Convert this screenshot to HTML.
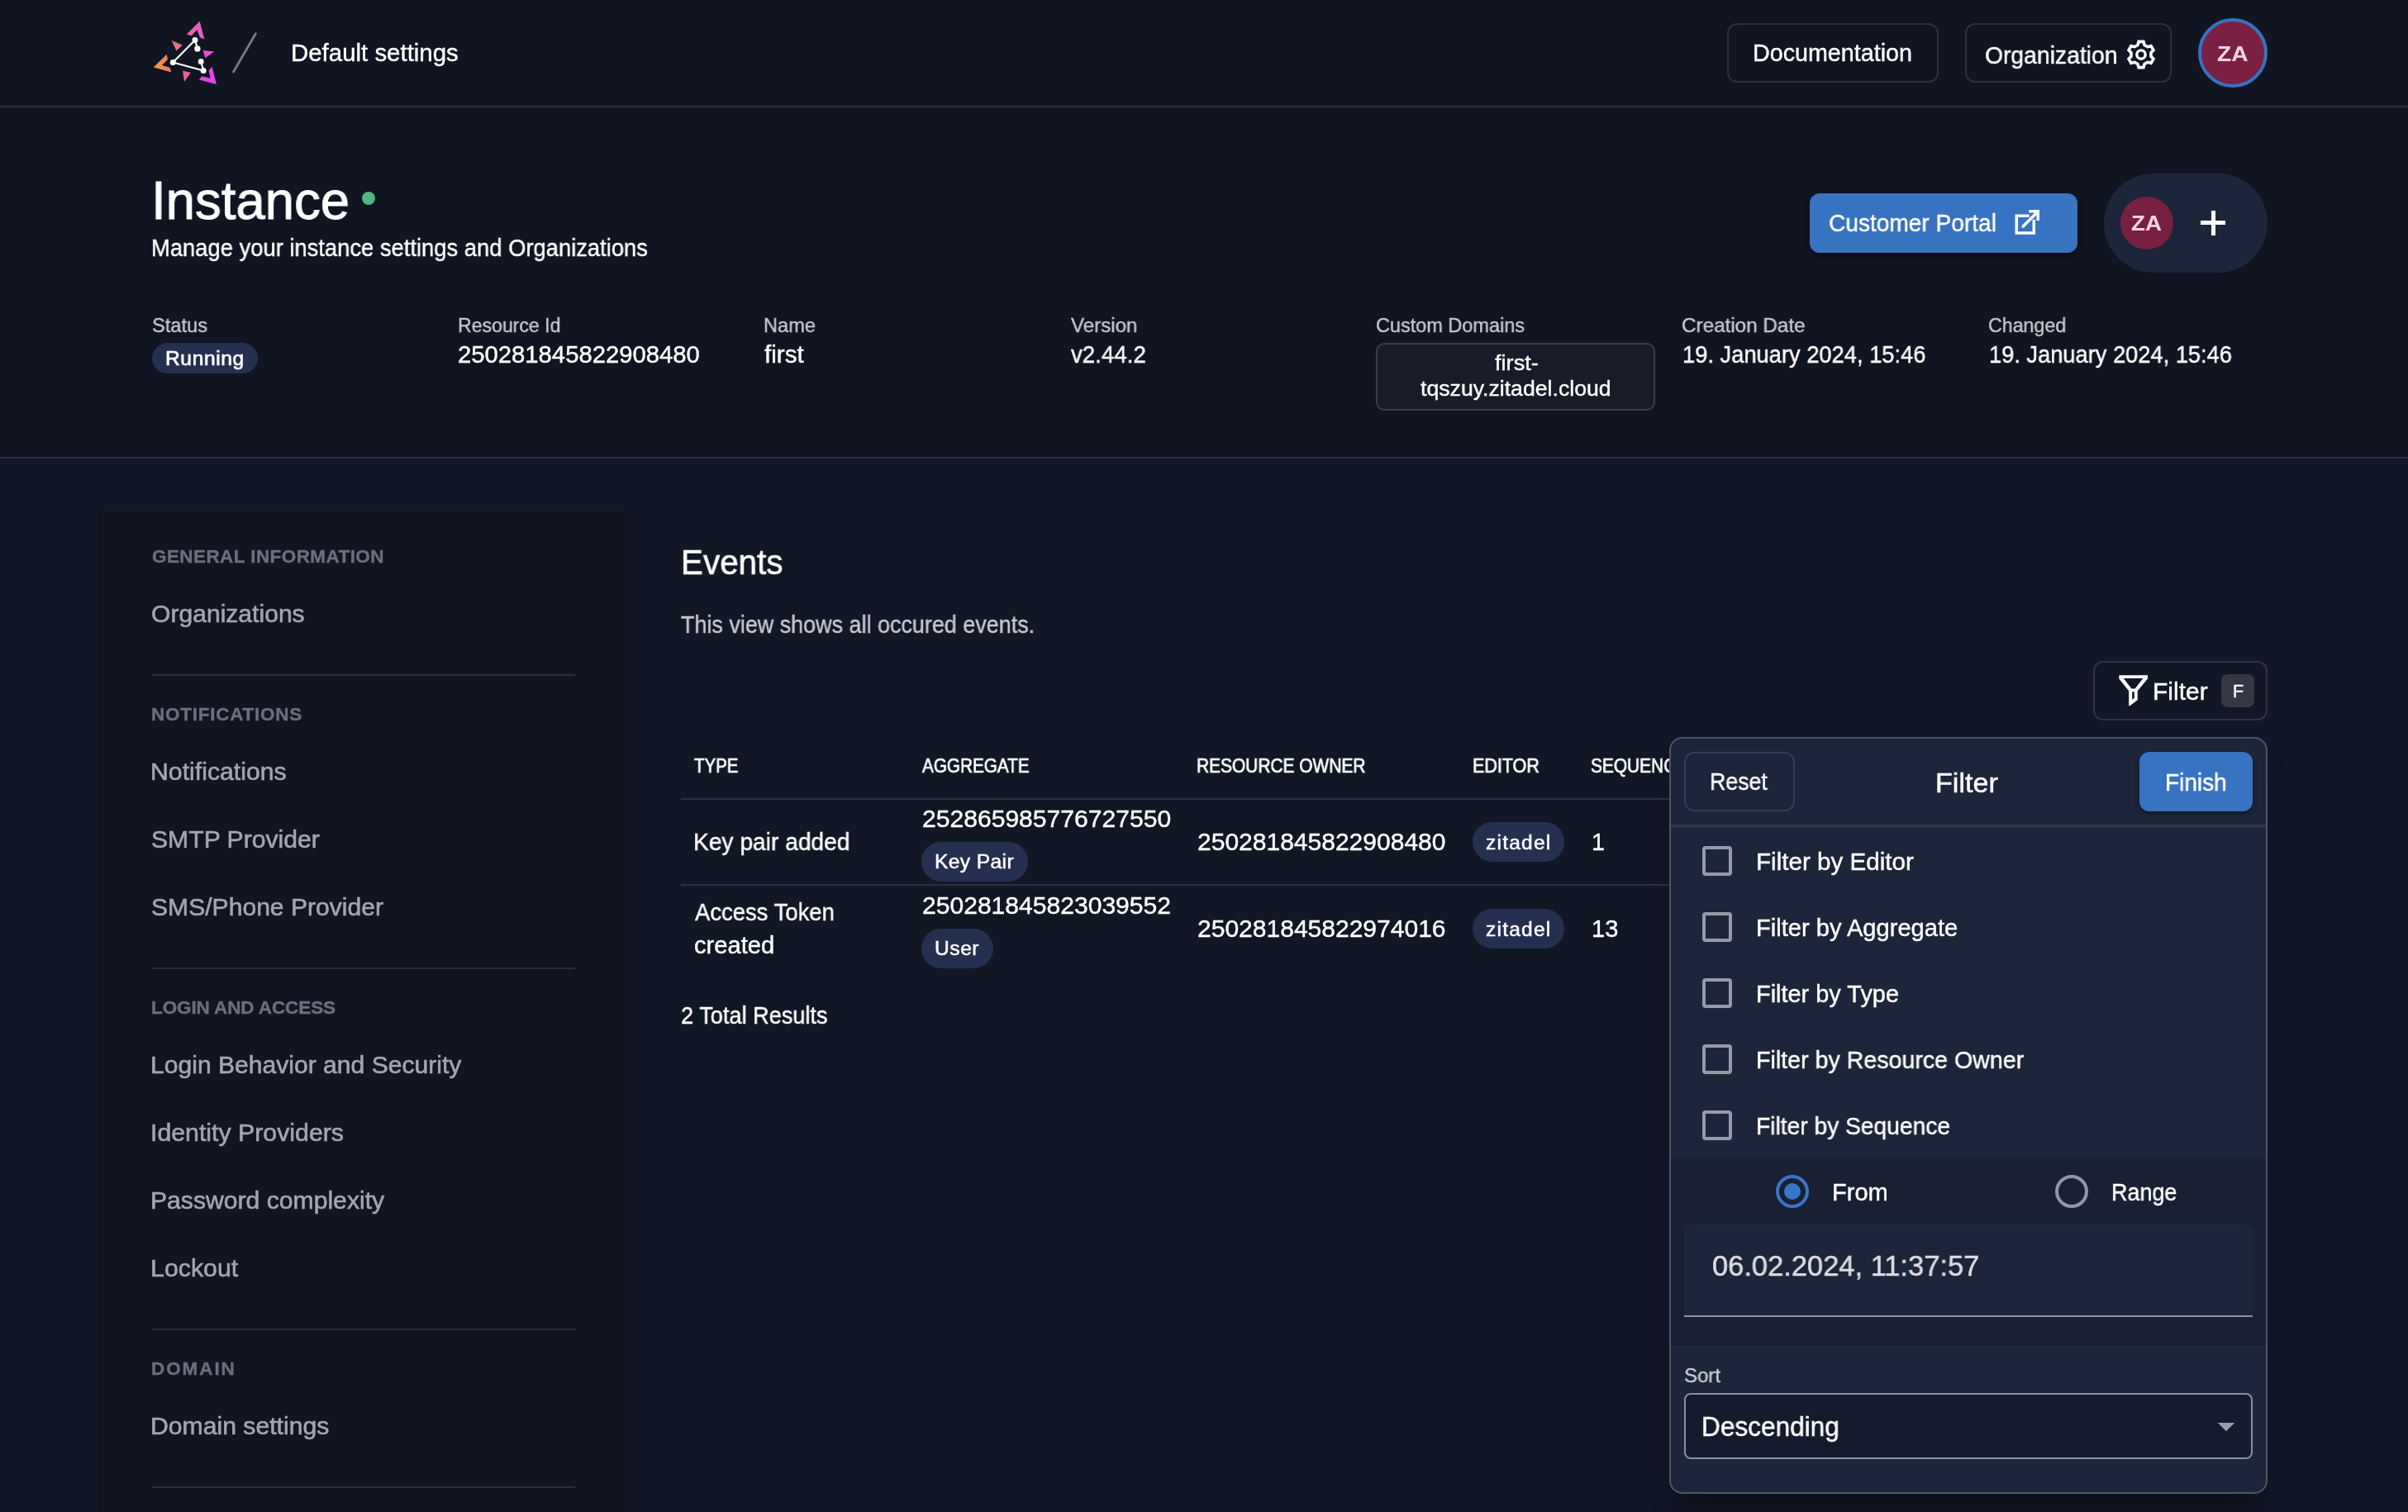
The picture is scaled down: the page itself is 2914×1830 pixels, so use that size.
<!DOCTYPE html>
<html lang="en"><head><meta charset="utf-8"><title>ZITADEL Console - Instance Events</title>
<style>
html,body{margin:0;padding:0}
body{width:2914px;height:1830px;overflow:hidden;background:#121726;font-family:"Liberation Sans",sans-serif;position:relative}
.t{position:absolute;white-space:pre;z-index:3;transform-origin:0 0;-webkit-text-stroke:0.4px currentColor;will-change:transform}
.t{margin:0;padding:0;font-weight:400;display:block;text-decoration:none}
.b{position:absolute;box-sizing:border-box}
svg{position:absolute;overflow:visible}
@media (max-width:1600px){html{zoom:.5}}

</style></head>
<body>
<!-- top area -->
<div class="b" style="left:0;top:0;width:2914px;height:554px;background:#111421"></div>
<div class="b" style="left:0;top:128px;width:2914px;height:2px;background:#2c303d"></div>
<div class="b" style="left:0;top:553px;width:2914px;height:2px;background:#2c303d"></div>
<!-- logo -->
<svg style="left:0;top:0" width="320" height="128" viewBox="0 0 320 128">
<defs>
<linearGradient id="gl" x1="186" y1="80" x2="207" y2="80" gradientUnits="userSpaceOnUse"><stop offset="0" stop-color="#f19a3a"/><stop offset="1" stop-color="#ec7768"/></linearGradient>
<linearGradient id="gt" x1="226" y1="40" x2="247" y2="40" gradientUnits="userSpaceOnUse"><stop offset="0" stop-color="#ea62a8"/><stop offset="1" stop-color="#e45ac4"/></linearGradient>
<linearGradient id="gb" x1="241" y1="90" x2="262" y2="90" gradientUnits="userSpaceOnUse"><stop offset="0" stop-color="#dc4cd2"/><stop offset="1" stop-color="#e545e8"/></linearGradient>
</defs>
<polygon fill="url(#gt)" points="241.7,25.8 247.4,47.4 242,45.5 238.5,36 231.6,43.3 225.8,41.4"/>
<polygon fill="#e9707f" points="207.7,49 220.8,54.4 213.5,61.4"/>
<polygon fill="#dc4fd4" points="245.5,61.1 259.2,62.3 248.4,70.3"/>
<polygon fill="url(#gl)" points="185.8,81.4 201.7,65.8 203,71.9 196,78.9 205.5,81.7 207.4,87.4"/>
<polygon fill="#e8609a" points="221.1,85.5 230.9,88.1 223,98.9"/>
<polygon fill="url(#gb)" points="262,102 256.6,80.8 252.5,85.2 254.7,94.7 244.3,92.2 240.8,96.6"/>
<g stroke="#fff" stroke-width="2.1" fill="none" stroke-linecap="round"><path d="M236 48.4L209.3 75.4L246.2 85.5M236 48.4L238.9 58.9M243.2 74.4L246.2 85.5"/></g>
<g fill="#fff"><circle cx="236" cy="48.4" r="3.5"/><circle cx="209.3" cy="75.4" r="3.5"/><circle cx="246.2" cy="85.5" r="3.5"/><circle cx="238.9" cy="58.9" r="3.7"/><circle cx="243.2" cy="74.4" r="3.5"/></g>
<line x1="282.5" y1="87" x2="309.5" y2="40.5" stroke="#7b7e88" stroke-width="2.6" stroke-linecap="round"/>
</svg>
<!-- header buttons -->
<div class="b" style="left:2090px;top:28px;width:256px;height:72px;border:2px solid #2c2f3b;border-radius:12px"></div>
<div class="b" style="left:2378px;top:28px;width:250px;height:72px;border:2px solid #2c2f3b;border-radius:12px"></div>
<svg style="left:2571.2px;top:45.5px" width="40" height="40" viewBox="-20 -20 40 40">
<g fill="none" stroke="#fff" stroke-width="3.6" stroke-linejoin="miter">
<path d="M-4.10 -11.50L-2.90 -15.60L2.90 -15.60L4.10 -11.50L7.91 -9.30L12.06 -10.31L14.96 -5.29L12.01 -2.20L12.01 2.20L14.96 5.29L12.06 10.31L7.91 9.30L4.10 11.50L2.90 15.60L-2.90 15.60L-4.10 11.50L-7.91 9.30L-12.06 10.31L-14.96 5.29L-12.01 2.20L-12.01 -2.20L-14.96 -5.29L-12.06 -10.31L-7.91 -9.30Z"/>
<circle cx="0" cy="0" r="5.2" stroke-width="3.35"/>
</g></svg>
<div class="b" style="left:2660px;top:22px;width:84px;height:84px;border-radius:50%;background:#7a2043;border:4px solid #3573c0"></div>
<!-- title right -->
<div class="b" style="left:2190px;top:234px;width:324px;height:72px;border-radius:12px;background:#3773c0;box-shadow:0 3px 6px rgba(0,0,0,.35)"></div>
<svg style="left:2430px;top:246px" width="48" height="48" viewBox="2430 246 48 48"><g fill="none" stroke="#fff" stroke-width="3.5">
<path d="M2455.7 261.2H2440.3V282H2461.3V265.8"/><path d="M2455.3 255.8H2466.2V267"/><path d="M2466.3 255.9L2448.2 274.1" stroke-linecap="round"/></g></svg>
<div class="b" style="left:2546px;top:210px;width:198px;height:120px;border-radius:60px;background:#1d253a"></div>
<div class="b" style="left:2566px;top:238px;width:64px;height:64px;border-radius:50%;background:#772042"></div>
<div class="b" style="left:2663px;top:267px;width:30px;height:5px;background:#fff"></div>
<div class="b" style="left:2675.5px;top:254.5px;width:5px;height:30px;background:#fff"></div>
<!-- title dot -->
<div class="b" style="left:438px;top:232px;width:16px;height:16px;border-radius:50%;background:#52b585"></div>
<!-- meta -->
<div class="b" style="left:184px;top:415px;width:128px;height:37px;border-radius:19px;background:#253050"></div>
<div class="b" style="left:1665px;top:415px;width:338px;height:82px;border:2px solid #3a3d49;border-radius:10px;background:#191c28"></div>
<!-- sidebar -->
<div class="b" style="left:120px;top:619px;width:639px;height:1300px;background:#111421"></div>
<div class="b" style="left:184px;top:815.5px;width:512px;height:2px;background:#2a2e3b"></div>
<div class="b" style="left:184px;top:1171px;width:512px;height:2px;background:#2a2e3b"></div>
<div class="b" style="left:184px;top:1607.5px;width:512px;height:2px;background:#2a2e3b"></div>
<div class="b" style="left:184px;top:1798.5px;width:512px;height:2px;background:#2a2e3b"></div>
<!-- table -->
<div class="b" style="left:824px;top:966px;width:1920px;height:2px;background:#2c3040;z-index:1"></div>
<div class="b" style="left:824px;top:1070px;width:1920px;height:2px;background:#2c3040;z-index:1"></div>
<div class="b" style="left:1115px;top:1019px;width:129px;height:48px;border-radius:24px;background:#253050"></div>
<div class="b" style="left:1115px;top:1124px;width:87px;height:48px;border-radius:24px;background:#253050"></div>
<div class="b" style="left:1782px;top:995px;width:111px;height:48px;border-radius:24px;background:#253050"></div>
<div class="b" style="left:1782px;top:1100px;width:111px;height:48px;border-radius:24px;background:#253050"></div>
<!-- filter button -->
<div class="b" style="left:2533px;top:800px;width:211px;height:72px;border:2px solid #2f3340;border-radius:12px"></div>
<svg style="left:2560px;top:812px" width="44" height="48" viewBox="2560 812 44 48"><path fill="#fff" fill-rule="evenodd" d="M2564.3 817.3H2599V821.5L2586.7 836.2V847.3L2577.4 854.2H2576.2V836.2L2564.3 821.5ZM2569.8 821.1H2593.3L2583.7 833.4H2579.4ZM2580.2 837.3H2582.9V844.5L2580.2 846.9Z"/></svg>
<div class="b" style="left:2688px;top:816px;width:40px;height:40px;border-radius:8px;background:#343845"></div>
<!-- filter panel -->
<div class="b" style="left:2020px;top:892px;width:724px;height:916px;border:2px solid #4e556a;border-radius:16px;background:#1d253a;z-index:2;box-shadow:0 26px 36px -16px rgba(0,0,0,.42);overflow:hidden">
  <div class="b" style="left:0;top:104px;width:720px;height:4px;background:#2d3448"></div>
  <div class="b" style="left:0;top:508px;width:720px;height:227px;background:#192033"></div>
</div>
<div id="panelitems" style="position:absolute;left:0;top:0;z-index:3">
<div class="b" style="left:2038px;top:910px;width:134px;height:72px;border:2px solid #353c50;border-radius:12px"></div>
<div class="b" style="left:2589px;top:910px;width:137px;height:72px;border-radius:12px;background:#3773c0;box-shadow:0 3px 6px rgba(0,0,0,.35)"></div>
<div class="b" style="left:2060px;top:1024px;width:36px;height:36px;border:4px solid #969aa8;border-radius:4px"></div>
<div class="b" style="left:2060px;top:1104px;width:36px;height:36px;border:4px solid #969aa8;border-radius:4px"></div>
<div class="b" style="left:2060px;top:1184px;width:36px;height:36px;border:4px solid #969aa8;border-radius:4px"></div>
<div class="b" style="left:2060px;top:1264px;width:36px;height:36px;border:4px solid #969aa8;border-radius:4px"></div>
<div class="b" style="left:2060px;top:1344px;width:36px;height:36px;border:4px solid #969aa8;border-radius:4px"></div>
<div class="b" style="left:2149px;top:1422px;width:40px;height:40px;border:4.5px solid #3875c4;border-radius:50%"></div>
<div class="b" style="left:2159px;top:1432px;width:20px;height:20px;background:#3875c4;border-radius:50%"></div>
<div class="b" style="left:2487px;top:1422px;width:40px;height:40px;border:4.5px solid #9296a3;border-radius:50%"></div>
<div class="b" style="left:2038px;top:1482px;width:688px;height:112px;background:#1d253a;border-radius:8px 8px 0 0;border-bottom:2px solid #8e92a0"></div>
<div class="b" style="left:2038px;top:1686px;width:688px;height:80px;border:2px solid #8a8e9b;border-radius:8px;background:#151a2c"></div>
<svg style="left:2680px;top:1718px" width="30" height="20" viewBox="2680 1718 30 20"><polygon fill="#9a9da8" points="2683.7,1722 2704.3,1722 2694,1732.3"/></svg>
</div>

<div id="texts">
<div class="t" style="left:352px;top:46px;font-size:28.7px;line-height:36px;color:#ffffff;transform:scaleX(1.0257);">Default settings</div>
<div class="t" style="left:2121px;top:46px;font-size:28.7px;line-height:36px;color:#ffffff;">Documentation</div>
<div class="t" style="left:2402px;top:49px;font-size:28.7px;line-height:36px;color:#ffffff;transform:scaleX(0.9869);">Organization</div>
<div class="t" style="left:2683px;top:49px;font-size:26.5px;line-height:33px;color:#f7d0e6;transform:scaleX(1.0647);font-weight:700;-webkit-text-stroke-width:0px;">ZA</div>
<h1 class="t" style="left:183px;top:202px;font-size:65.6px;line-height:82px;color:#ffffff;transform:scaleX(0.9682);-webkit-text-stroke-width:0.94px;">Instance</h1>
<p class="t" style="left:183px;top:282px;font-size:28.7px;line-height:36px;color:#ffffff;transform:scaleX(0.9540);">Manage your instance settings and Organizations</p>
<div class="t" style="left:2213px;top:252px;font-size:28.7px;line-height:36px;color:#ffffff;transform:scaleX(0.9788);">Customer Portal</div>
<div class="t" style="left:2579px;top:254px;font-size:26px;line-height:32px;color:#f7d0e6;transform:scaleX(1.0666);font-weight:700;-webkit-text-stroke-width:0px;">ZA</div>
<div class="t" style="left:184px;top:378px;font-size:24.6px;line-height:31px;color:#c6c8cd;transform:scaleX(0.9615);">Status</div>
<div class="t" style="left:200px;top:418px;font-size:24.6px;line-height:31px;color:#ffffff;letter-spacing:0.598px;-webkit-text-stroke-width:0.7px;">Running</div>
<div class="t" style="left:554px;top:378px;font-size:24.6px;line-height:31px;color:#c6c8cd;transform:scaleX(0.9381);">Resource Id</div>
<div class="t" style="left:554px;top:411px;font-size:28.7px;line-height:36px;color:#ffffff;transform:scaleX(1.0195);">250281845822908480</div>
<div class="t" style="left:924px;top:378px;font-size:24.6px;line-height:31px;color:#c6c8cd;transform:scaleX(0.9581);">Name</div>
<div class="t" style="left:925px;top:411px;font-size:28.7px;line-height:36px;color:#ffffff;transform:scaleX(1.0343);">first</div>
<div class="t" style="left:1296px;top:378px;font-size:24.6px;line-height:31px;color:#c6c8cd;transform:scaleX(0.9794);">Version</div>
<div class="t" style="left:1296px;top:411px;font-size:28.7px;line-height:36px;color:#ffffff;transform:scaleX(0.9646);">v2.44.2</div>
<div class="t" style="left:1665px;top:378px;font-size:24.6px;line-height:31px;color:#c6c8cd;transform:scaleX(0.9546);">Custom Domains</div>
<div class="t" style="left:1809px;top:423px;font-size:26.67px;line-height:33px;color:#ffffff;transform:scaleX(1.0196);">first-</div>
<div class="t" style="left:1719px;top:454px;font-size:26.67px;line-height:33px;color:#ffffff;">tqszuy.zitadel.cloud</div>
<div class="t" style="left:2035px;top:378px;font-size:24.6px;line-height:31px;color:#c6c8cd;transform:scaleX(0.9859);">Creation Date</div>
<div class="t" style="left:2036px;top:411px;font-size:28.7px;line-height:36px;color:#ffffff;transform:scaleX(0.9515);">19. January 2024, 15:46</div>
<div class="t" style="left:2406px;top:378px;font-size:24.6px;line-height:31px;color:#c6c8cd;transform:scaleX(0.9435);">Changed</div>
<div class="t" style="left:2407px;top:411px;font-size:28.7px;line-height:36px;color:#ffffff;transform:scaleX(0.9499);">19. January 2024, 15:46</div>
<h4 class="t" style="left:184px;top:660px;font-size:22.5px;line-height:28px;color:#6b6e7c;letter-spacing:0.421px;font-weight:700;-webkit-text-stroke-width:0.4px;">GENERAL INFORMATION</h4>
<a class="t" style="left:183px;top:724px;font-size:30px;line-height:38px;color:#a4a6ae;transform:scaleX(1.0031);-webkit-text-stroke-width:0.6px;">Organizations</a>
<h4 class="t" style="left:183px;top:851px;font-size:22.5px;line-height:28px;color:#6b6e7c;letter-spacing:0.741px;font-weight:700;-webkit-text-stroke-width:0.4px;">NOTIFICATIONS</h4>
<a class="t" style="left:182px;top:915px;font-size:30px;line-height:38px;color:#a4a6ae;transform:scaleX(1.0082);-webkit-text-stroke-width:0.6px;">Notifications</a>
<a class="t" style="left:183px;top:997px;font-size:30px;line-height:38px;color:#a4a6ae;transform:scaleX(1.0050);-webkit-text-stroke-width:0.6px;">SMTP Provider</a>
<a class="t" style="left:183px;top:1079px;font-size:30px;line-height:38px;color:#a4a6ae;transform:scaleX(1.0032);-webkit-text-stroke-width:0.6px;">SMS/Phone Provider</a>
<h4 class="t" style="left:183px;top:1206px;font-size:22.5px;line-height:28px;color:#6b6e7c;letter-spacing:-0.102px;font-weight:700;-webkit-text-stroke-width:0.4px;">LOGIN AND ACCESS</h4>
<a class="t" style="left:182px;top:1270px;font-size:30px;line-height:38px;color:#a4a6ae;transform:scaleX(1.0030);-webkit-text-stroke-width:0.6px;">Login Behavior and Security</a>
<a class="t" style="left:182px;top:1352px;font-size:30px;line-height:38px;color:#a4a6ae;transform:scaleX(1.0095);-webkit-text-stroke-width:0.6px;">Identity Providers</a>
<a class="t" style="left:182px;top:1434px;font-size:30px;line-height:38px;color:#a4a6ae;transform:scaleX(1.0047);-webkit-text-stroke-width:0.6px;">Password complexity</a>
<a class="t" style="left:182px;top:1516px;font-size:30px;line-height:38px;color:#a4a6ae;transform:scaleX(1.0115);-webkit-text-stroke-width:0.6px;">Lockout</a>
<h4 class="t" style="left:183px;top:1643px;font-size:22.5px;line-height:28px;color:#6b6e7c;letter-spacing:1.910px;font-weight:700;-webkit-text-stroke-width:0.4px;">DOMAIN</h4>
<a class="t" style="left:182px;top:1707px;font-size:30px;line-height:38px;color:#a4a6ae;transform:scaleX(1.0056);-webkit-text-stroke-width:0.6px;">Domain settings</a>
<h2 class="t" style="left:824px;top:653px;font-size:43.0px;line-height:54px;color:#ffffff;transform:scaleX(0.9394);-webkit-text-stroke-width:0.61px;">Events</h2>
<p class="t" style="left:824px;top:738px;font-size:28.7px;line-height:36px;color:#c7c9cf;transform:scaleX(0.9389);">This view shows all occured events.</p>
<span class="t" style="left:840px;top:912px;font-size:23.6px;line-height:30px;color:#ffffff;transform:scaleX(0.8640);-webkit-text-stroke-width:0.7px;">TYPE</span>
<span class="t" style="left:1116px;top:912px;font-size:23.6px;line-height:30px;color:#ffffff;transform:scaleX(0.8775);-webkit-text-stroke-width:0.7px;">AGGREGATE</span>
<span class="t" style="left:1448px;top:912px;font-size:23.6px;line-height:30px;color:#ffffff;transform:scaleX(0.8858);-webkit-text-stroke-width:0.7px;">RESOURCE OWNER</span>
<span class="t" style="left:1782px;top:912px;font-size:23.6px;line-height:30px;color:#ffffff;transform:scaleX(0.9113);-webkit-text-stroke-width:0.7px;">EDITOR</span>
<span class="t" style="left:1925px;top:912px;font-size:23.6px;line-height:30px;color:#ffffff;transform:scaleX(0.8850);-webkit-text-stroke-width:0.7px;z-index:1;">SEQUENCE</span>
<div class="t" style="left:839px;top:1001px;font-size:28.7px;line-height:36px;color:#ffffff;transform:scaleX(0.9820);">Key pair added</div>
<div class="t" style="left:1116px;top:973px;font-size:28.7px;line-height:36px;color:#ffffff;transform:scaleX(1.0487);">252865985776727550</div>
<div class="t" style="left:1131px;top:1027px;font-size:24.6px;line-height:31px;color:#ffffff;letter-spacing:0.385px;-webkit-text-stroke-width:0.5px;">Key Pair</div>
<div class="t" style="left:1449px;top:1001px;font-size:28.7px;line-height:36px;color:#ffffff;transform:scaleX(1.0462);">250281845822908480</div>
<div class="t" style="left:1798px;top:1004px;font-size:24.6px;line-height:31px;color:#ffffff;letter-spacing:1.194px;-webkit-text-stroke-width:0.5px;">zitadel</div>
<div class="t" style="left:1926px;top:1001px;font-size:28.7px;line-height:36px;color:#ffffff;">1</div>
<div class="t" style="left:841px;top:1086px;font-size:28.7px;line-height:36px;color:#ffffff;transform:scaleX(0.9568);">Access Token</div>
<div class="t" style="left:840px;top:1126px;font-size:28.7px;line-height:36px;color:#ffffff;transform:scaleX(1.0153);">created</div>
<div class="t" style="left:1116px;top:1078px;font-size:28.7px;line-height:36px;color:#ffffff;transform:scaleX(1.0481);">250281845823039552</div>
<div class="t" style="left:1131px;top:1132px;font-size:24.6px;line-height:31px;color:#ffffff;letter-spacing:0.540px;-webkit-text-stroke-width:0.5px;">User</div>
<div class="t" style="left:1449px;top:1106px;font-size:28.7px;line-height:36px;color:#ffffff;transform:scaleX(1.0465);">250281845822974016</div>
<div class="t" style="left:1798px;top:1109px;font-size:24.6px;line-height:31px;color:#ffffff;letter-spacing:1.194px;-webkit-text-stroke-width:0.5px;">zitadel</div>
<div class="t" style="left:1926px;top:1106px;font-size:28.7px;line-height:36px;color:#ffffff;transform:scaleX(1.0130);">13</div>
<div class="t" style="left:824px;top:1211px;font-size:28.7px;line-height:36px;color:#ffffff;transform:scaleX(0.9463);">2 Total Results</div>
<div class="t" style="left:2605px;top:819px;font-size:28.7px;line-height:36px;color:#ffffff;transform:scaleX(1.0473);">Filter</div>
<div class="t" style="left:2702px;top:824px;font-size:21.5px;line-height:27px;color:#ffffff;">F</div>
<div class="t" style="left:2069px;top:928px;font-size:28.7px;line-height:36px;color:#ffffff;transform:scaleX(0.9310);">Reset</div>
<div class="t" style="left:2342px;top:927px;font-size:32.8px;line-height:41px;color:#ffffff;transform:scaleX(1.0393);-webkit-text-stroke-width:0.47px;">Filter</div>
<div class="t" style="left:2620px;top:929px;font-size:28.7px;line-height:36px;color:#ffffff;transform:scaleX(0.9757);">Finish</div>
<label class="t" style="left:2125px;top:1025px;font-size:28.7px;line-height:36px;color:#ffffff;transform:scaleX(1.0318);">Filter by Editor</label>
<label class="t" style="left:2125px;top:1105px;font-size:28.7px;line-height:36px;color:#ffffff;transform:scaleX(1.0144);">Filter by Aggregate</label>
<label class="t" style="left:2125px;top:1185px;font-size:28.7px;line-height:36px;color:#ffffff;transform:scaleX(1.0078);">Filter by Type</label>
<label class="t" style="left:2125px;top:1265px;font-size:28.7px;line-height:36px;color:#ffffff;transform:scaleX(0.9969);">Filter by Resource Owner</label>
<label class="t" style="left:2125px;top:1345px;font-size:28.7px;line-height:36px;color:#ffffff;transform:scaleX(0.9825);">Filter by Sequence</label>
<label class="t" style="left:2217px;top:1425px;font-size:28.7px;line-height:36px;color:#ffffff;transform:scaleX(1.0136);">From</label>
<label class="t" style="left:2555px;top:1425px;font-size:28.7px;line-height:36px;color:#ffffff;transform:scaleX(0.9384);">Range</label>
<div class="t" style="left:2072px;top:1510px;font-size:34.8px;line-height:44px;color:#dcdde1;transform:scaleX(0.9906);-webkit-text-stroke-width:0.5px;">06.02.2024, 11:37:57</div>
<label class="t" style="left:2038px;top:1649px;font-size:24.6px;line-height:31px;color:#c9cbd1;transform:scaleX(0.9772);">Sort</label>
<div class="t" style="left:2059px;top:1706px;font-size:32.8px;line-height:41px;color:#ffffff;transform:scaleX(0.9629);-webkit-text-stroke-width:0.47px;">Descending</div>
</div>
</body></html>
